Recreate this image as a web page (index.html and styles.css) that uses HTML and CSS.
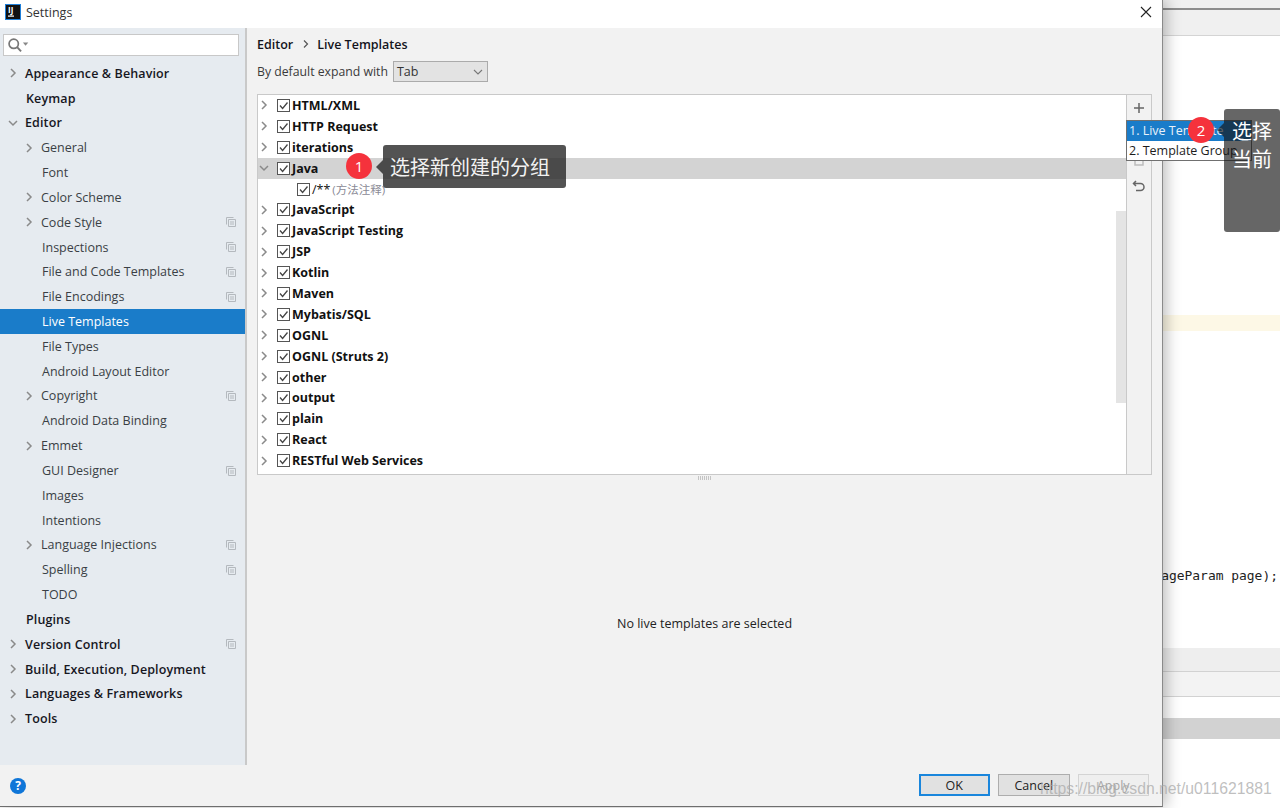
FILE: index.html
```html
<!DOCTYPE html>
<html lang="en">
<head>
<meta charset="utf-8">
<title>Settings</title>
<link rel="stylesheet" href="styles.css">
</head>
<body>
<div class="dialog">
  <header class="titlebar">
    <svg class="app-logo" width="16" height="16" viewBox="0 0 16 16"><rect x="0.5" y="0.5" width="15" height="15" fill="#111" stroke="#1f7fd8"/><rect x="3" y="11.5" width="6" height="1.2" fill="#fff"/></svg>
    <span class="app-mark">IJ</span>
    <span class="title">Settings</span>
    <svg class="close" width="12" height="12" viewBox="0 0 12 12"><path d="M1 1l10 10M11 1L1 11" stroke="#222" stroke-width="1.1" fill="none"/></svg>
  </header>
  <div class="main">
    <aside class="sidebar">
      <div class="search">
        <svg width="22" height="16" viewBox="0 0 18 13"><circle cx="5.5" cy="5.5" r="3.8" fill="none" stroke="#777" stroke-width="1.4"/><path d="M8.3 8.3l3.2 3.4" stroke="#777" stroke-width="1.6"/><path d="M13 4.5h4.4l-2.2 2.6z" fill="#888"/></svg>
      </div>
      <nav class="nav">
        <div class="nav-row top"><svg class="chev" viewBox="0 0 10 10"><path d="M3 1l4 4-4 4"/></svg><span>Appearance &amp; Behavior</span></div>
        <div class="nav-row top plain"><span>Keymap</span></div>
        <div class="nav-row top"><svg class="chev" viewBox="0 0 10 10"><path d="M1 3l4 4 4-4"/></svg><span>Editor</span></div>
        <div class="nav-row sub"><svg class="chev" viewBox="0 0 10 10"><path d="M3 1l4 4-4 4"/></svg><span>General</span></div>
        <div class="nav-row sub plain"><span>Font</span></div>
        <div class="nav-row sub"><svg class="chev" viewBox="0 0 10 10"><path d="M3 1l4 4-4 4"/></svg><span>Color Scheme</span></div>
        <div class="nav-row sub"><svg class="chev" viewBox="0 0 10 10"><path d="M3 1l4 4-4 4"/></svg><span>Code Style</span><svg class="copy" viewBox="0 0 10 10"><path d="M0.5 7.5v-7h7M2.5 2.5h7v7h-7zM4 5h4M4 7h4"/></svg></div>
        <div class="nav-row sub plain"><span>Inspections</span><svg class="copy" viewBox="0 0 10 10"><path d="M0.5 7.5v-7h7M2.5 2.5h7v7h-7zM4 5h4M4 7h4"/></svg></div>
        <div class="nav-row sub plain"><span>File and Code Templates</span><svg class="copy" viewBox="0 0 10 10"><path d="M0.5 7.5v-7h7M2.5 2.5h7v7h-7zM4 5h4M4 7h4"/></svg></div>
        <div class="nav-row sub plain"><span>File Encodings</span><svg class="copy" viewBox="0 0 10 10"><path d="M0.5 7.5v-7h7M2.5 2.5h7v7h-7zM4 5h4M4 7h4"/></svg></div>
        <div class="nav-row sub plain selected"><span>Live Templates</span></div>
        <div class="nav-row sub plain"><span>File Types</span></div>
        <div class="nav-row sub plain"><span>Android Layout Editor</span></div>
        <div class="nav-row sub"><svg class="chev" viewBox="0 0 10 10"><path d="M3 1l4 4-4 4"/></svg><span>Copyright</span><svg class="copy" viewBox="0 0 10 10"><path d="M0.5 7.5v-7h7M2.5 2.5h7v7h-7zM4 5h4M4 7h4"/></svg></div>
        <div class="nav-row sub plain"><span>Android Data Binding</span></div>
        <div class="nav-row sub"><svg class="chev" viewBox="0 0 10 10"><path d="M3 1l4 4-4 4"/></svg><span>Emmet</span></div>
        <div class="nav-row sub plain"><span>GUI Designer</span><svg class="copy" viewBox="0 0 10 10"><path d="M0.5 7.5v-7h7M2.5 2.5h7v7h-7zM4 5h4M4 7h4"/></svg></div>
        <div class="nav-row sub plain"><span>Images</span></div>
        <div class="nav-row sub plain"><span>Intentions</span></div>
        <div class="nav-row sub"><svg class="chev" viewBox="0 0 10 10"><path d="M3 1l4 4-4 4"/></svg><span>Language Injections</span><svg class="copy" viewBox="0 0 10 10"><path d="M0.5 7.5v-7h7M2.5 2.5h7v7h-7zM4 5h4M4 7h4"/></svg></div>
        <div class="nav-row sub plain"><span>Spelling</span><svg class="copy" viewBox="0 0 10 10"><path d="M0.5 7.5v-7h7M2.5 2.5h7v7h-7zM4 5h4M4 7h4"/></svg></div>
        <div class="nav-row sub plain"><span>TODO</span></div>
        <div class="nav-row top plain"><span>Plugins</span></div>
        <div class="nav-row top"><svg class="chev" viewBox="0 0 10 10"><path d="M3 1l4 4-4 4"/></svg><span>Version Control</span><svg class="copy" viewBox="0 0 10 10"><path d="M0.5 7.5v-7h7M2.5 2.5h7v7h-7zM4 5h4M4 7h4"/></svg></div>
        <div class="nav-row top"><svg class="chev" viewBox="0 0 10 10"><path d="M3 1l4 4-4 4"/></svg><span>Build, Execution, Deployment</span></div>
        <div class="nav-row top"><svg class="chev" viewBox="0 0 10 10"><path d="M3 1l4 4-4 4"/></svg><span>Languages &amp; Frameworks</span></div>
        <div class="nav-row top"><svg class="chev" viewBox="0 0 10 10"><path d="M3 1l4 4-4 4"/></svg><span>Tools</span></div>
      </nav>
    </aside>
    <section class="content">
      <div class="crumbs"><span>Editor</span><svg class="crumb-sep" viewBox="0 0 10 10"><path d="M3 1.5l3.5 3.5L3 8.5"/></svg><span>Live Templates</span></div>
      <div class="expand"><span>By default expand with</span>
        <div class="combo"><span>Tab</span><svg class="combo-arrow" viewBox="0 0 10 10"><path d="M1 3l4 4 4-4"/></svg></div>
      </div>
      <div class="tree-panel">
        <div class="tree">
          <div class="tree-row"><svg class="chev" viewBox="0 0 10 10"><path d="M3 1l4 4-4 4"/></svg><svg class="check" viewBox="0 0 13 13"><rect x="0.5" y="0.5" width="12" height="12"/><path d="M3 6.5l2.6 3L10.5 3.5"/></svg><span class="name">HTML/XML</span></div>
          <div class="tree-row"><svg class="chev" viewBox="0 0 10 10"><path d="M3 1l4 4-4 4"/></svg><svg class="check" viewBox="0 0 13 13"><rect x="0.5" y="0.5" width="12" height="12"/><path d="M3 6.5l2.6 3L10.5 3.5"/></svg><span class="name">HTTP Request</span></div>
          <div class="tree-row"><svg class="chev" viewBox="0 0 10 10"><path d="M3 1l4 4-4 4"/></svg><svg class="check" viewBox="0 0 13 13"><rect x="0.5" y="0.5" width="12" height="12"/><path d="M3 6.5l2.6 3L10.5 3.5"/></svg><span class="name">iterations</span></div>
          <div class="tree-row active"><svg class="chev" viewBox="0 0 10 10"><path d="M1 3l4 4 4-4"/></svg><svg class="check" viewBox="0 0 13 13"><rect x="0.5" y="0.5" width="12" height="12"/><path d="M3 6.5l2.6 3L10.5 3.5"/></svg><span class="name">Java</span></div>
          <div class="tree-row child"><svg class="check" viewBox="0 0 13 13"><rect x="0.5" y="0.5" width="12" height="12"/><path d="M3 6.5l2.6 3L10.5 3.5"/></svg><span class="leaf">/**</span><span class="hint">(方法注释)</span></div>
          <div class="tree-row"><svg class="chev" viewBox="0 0 10 10"><path d="M3 1l4 4-4 4"/></svg><svg class="check" viewBox="0 0 13 13"><rect x="0.5" y="0.5" width="12" height="12"/><path d="M3 6.5l2.6 3L10.5 3.5"/></svg><span class="name">JavaScript</span></div>
          <div class="tree-row"><svg class="chev" viewBox="0 0 10 10"><path d="M3 1l4 4-4 4"/></svg><svg class="check" viewBox="0 0 13 13"><rect x="0.5" y="0.5" width="12" height="12"/><path d="M3 6.5l2.6 3L10.5 3.5"/></svg><span class="name">JavaScript Testing</span></div>
          <div class="tree-row"><svg class="chev" viewBox="0 0 10 10"><path d="M3 1l4 4-4 4"/></svg><svg class="check" viewBox="0 0 13 13"><rect x="0.5" y="0.5" width="12" height="12"/><path d="M3 6.5l2.6 3L10.5 3.5"/></svg><span class="name">JSP</span></div>
          <div class="tree-row"><svg class="chev" viewBox="0 0 10 10"><path d="M3 1l4 4-4 4"/></svg><svg class="check" viewBox="0 0 13 13"><rect x="0.5" y="0.5" width="12" height="12"/><path d="M3 6.5l2.6 3L10.5 3.5"/></svg><span class="name">Kotlin</span></div>
          <div class="tree-row"><svg class="chev" viewBox="0 0 10 10"><path d="M3 1l4 4-4 4"/></svg><svg class="check" viewBox="0 0 13 13"><rect x="0.5" y="0.5" width="12" height="12"/><path d="M3 6.5l2.6 3L10.5 3.5"/></svg><span class="name">Maven</span></div>
          <div class="tree-row"><svg class="chev" viewBox="0 0 10 10"><path d="M3 1l4 4-4 4"/></svg><svg class="check" viewBox="0 0 13 13"><rect x="0.5" y="0.5" width="12" height="12"/><path d="M3 6.5l2.6 3L10.5 3.5"/></svg><span class="name">Mybatis/SQL</span></div>
          <div class="tree-row"><svg class="chev" viewBox="0 0 10 10"><path d="M3 1l4 4-4 4"/></svg><svg class="check" viewBox="0 0 13 13"><rect x="0.5" y="0.5" width="12" height="12"/><path d="M3 6.5l2.6 3L10.5 3.5"/></svg><span class="name">OGNL</span></div>
          <div class="tree-row"><svg class="chev" viewBox="0 0 10 10"><path d="M3 1l4 4-4 4"/></svg><svg class="check" viewBox="0 0 13 13"><rect x="0.5" y="0.5" width="12" height="12"/><path d="M3 6.5l2.6 3L10.5 3.5"/></svg><span class="name">OGNL (Struts 2)</span></div>
          <div class="tree-row"><svg class="chev" viewBox="0 0 10 10"><path d="M3 1l4 4-4 4"/></svg><svg class="check" viewBox="0 0 13 13"><rect x="0.5" y="0.5" width="12" height="12"/><path d="M3 6.5l2.6 3L10.5 3.5"/></svg><span class="name">other</span></div>
          <div class="tree-row"><svg class="chev" viewBox="0 0 10 10"><path d="M3 1l4 4-4 4"/></svg><svg class="check" viewBox="0 0 13 13"><rect x="0.5" y="0.5" width="12" height="12"/><path d="M3 6.5l2.6 3L10.5 3.5"/></svg><span class="name">output</span></div>
          <div class="tree-row"><svg class="chev" viewBox="0 0 10 10"><path d="M3 1l4 4-4 4"/></svg><svg class="check" viewBox="0 0 13 13"><rect x="0.5" y="0.5" width="12" height="12"/><path d="M3 6.5l2.6 3L10.5 3.5"/></svg><span class="name">plain</span></div>
          <div class="tree-row"><svg class="chev" viewBox="0 0 10 10"><path d="M3 1l4 4-4 4"/></svg><svg class="check" viewBox="0 0 13 13"><rect x="0.5" y="0.5" width="12" height="12"/><path d="M3 6.5l2.6 3L10.5 3.5"/></svg><span class="name">React</span></div>
          <div class="tree-row"><svg class="chev" viewBox="0 0 10 10"><path d="M3 1l4 4-4 4"/></svg><svg class="check" viewBox="0 0 13 13"><rect x="0.5" y="0.5" width="12" height="12"/><path d="M3 6.5l2.6 3L10.5 3.5"/></svg><span class="name">RESTful Web Services</span></div>
          <div class="scrollbar"></div>
        </div>
        <div class="tools">
          <svg class="tool" viewBox="0 0 14 14"><path d="M7 2v10M2 7h10"/></svg>
          <svg class="tool" viewBox="0 0 14 14"><path d="M2 7h10"/></svg>
          <svg class="tool muted" viewBox="0 0 14 14"><path d="M3 2h8v10H3z"/></svg>
          <svg class="tool" viewBox="0 0 14 14"><path d="M4 2L1.5 4.5 4 7M2 4.5h6.5a3.5 3.5 0 0 1 0 7H4"/></svg>
        </div>
      </div>
      <div class="splitter"></div>
      <div class="empty"><span>No live templates are selected</span></div>
    </section>
  </div>
  <footer class="footer">
    <span class="help">?</span>
    <div class="buttons">
      <div class="btn default">OK</div>
      <div class="btn">Cancel</div>
      <div class="btn disabled">Apply</div>
    </div>
  </footer>
</div>
<div class="backdrop">
  <div class="bd-tabs"></div>
  <div class="bd-code">
    <div class="bd-caret"></div>
    <div class="bd-text">ageParam page);</div>
  </div>
  <div class="bd-bar one"></div>
  <div class="bd-bar two"></div>
  <div class="bd-blank"></div>
  <div class="bd-bar three"></div>
  <div class="bd-rest"></div>
</div>

<div class="tip tip-one"><span>选择新创建的分组</span></div>
<div class="badge badge-one">1</div>
<div class="popup">
  <div class="popup-item on">1. Live Template</div>
  <div class="popup-item">2. Template Group</div>
</div>
<div class="tip tip-two"><span>选择<br>当前</span></div>
<div class="badge badge-two">2</div>
<div class="watermark">https://blog.csdn.net/u011621881</div>
</body>
</html>
```
FILE: styles.css
```css
* { box-sizing: border-box; }
html, body { margin: 0; padding: 0; }
body {
  width: 1280px; height: 808px; overflow: hidden; position: relative;
  display: flex; background: #fff;
  font-family: "Open Sans", "Noto Sans", sans-serif; font-size: 12.5px; color: #1c1c1c;
}
.dialog {
  width: 1163px; height: 807px; flex: none; display: flex; flex-direction: column;
  background: #f2f2f2; border-right: 1px solid #8a8a8a; border-bottom: 1px solid #6e6e6e;
  box-shadow: 3px 0 14px rgba(0,0,0,.28); position: relative; z-index: 1;
}
.titlebar { height: 28px; flex: none; background: #fff; display: flex; align-items: center; padding: 0 0 0 5px; position: relative; }
.app-logo { flex: none; margin-top: -4px; }
.app-mark { position: absolute; left: 8px; top: 5px; color: #fff; font-size: 8px; font-weight: 700; line-height: 10px; }
.title { margin-left: 5px; margin-top: -3px; font-size: 12.5px; color: #333; }
.close { margin-left: auto; margin-right: 10px; margin-top: -5px; }
.main { flex: 1; display: flex; min-height: 0; }
.sidebar { width: 247px; flex: none; background: #e6ebf0; border-right: 2px solid #c9c9c9; padding: 6px 0 0; }
.search {
  margin-left: 3px; width: 236px; height: 22px; background: #fff; border: 1px solid #c8c8c8;
  display: flex; align-items: center; padding-left: 3px;
}
.nav { margin-top: 4.8px; }
.nav-row { height: 24.83px; display: flex; align-items: center; position: relative; }
.nav-row .chev { width: 10px; height: 10px; flex: none; }
.chev { fill: none; stroke: #8a8a8a; stroke-width: 1.5; }
.nav-row.top { padding-left: 8px; font-weight: 600; color: #17171f; letter-spacing: .12px; }
.nav-row.top span { margin-left: 7px; }
.nav-row.top.plain { padding-left: 26px; }
.nav-row.top.plain span { margin-left: 0; }
.nav-row.sub { padding-left: 24px; color: #3a3f45; }
.nav-row.sub span { margin-left: 7px; }
.nav-row.sub.plain { padding-left: 42px; }
.nav-row.sub.plain span { margin-left: 0; }
.nav-row.selected { background: #1a7cc9; color: #fff; }
.copy { position: absolute; left: 226px; top: 7.5px; width: 10px; height: 10px; fill: none; stroke: #b4b9be; stroke-width: 1; }
.content { flex: 1; min-width: 0; padding: 0 10px 0 10px; display: flex; flex-direction: column; }
.crumbs { height: 32px; display: flex; align-items: center; font-weight: 600; color: #14141c; flex: none; }
.crumb-sep { width: 10px; height: 10px; margin: 0 6px 0 8px; fill: none; stroke: #555; stroke-width: 1.2; }
.expand { height: 23px; display: flex; align-items: center; gap: 5px; color: #3a3a3a; flex: none; font-size: 12.25px; }
.combo {
  width: 95px; height: 21px; background: #e3e3e3; border: 1px solid #ababab;
  display: flex; align-items: center; padding: 0 0 0 3px; color: #333; font-size: 12.5px;
}
.combo-arrow { width: 10px; height: 10px; margin-left: auto; margin-right: 4px; fill: none; stroke: #777; stroke-width: 1.1; }
.tree-panel { margin-top: 11px; height: 381px; flex: none; background: #fff; border: 1px solid #c9c9c9; display: flex; }
.tree { flex: 1; min-width: 0; position: relative; padding-top: 0; }
.tree-row { height: 20.9px; display: flex; align-items: center; padding-left: 1px; font-weight: 700; color: #111; }
.tree-row .chev { width: 10px; height: 10px; flex: none; }
.tree-row.active { background: #d3d3d3; }
.check { width: 13px; height: 13px; flex: none; margin-left: 8px; fill: #fff; }
.check rect { stroke: #555; stroke-width: 1; }
.check path { stroke: #444; stroke-width: 1.3; fill: none; }
.tree-row .name { margin-left: 2px; }
.tree-row.child { padding-left: 31px; font-weight: 400; }
.tree-row.child .check { margin-left: 8px; }
.leaf { margin-left: 2px; }
.hint { margin-left: 2px; color: #8a8a96; font-family: "Open Sans", "Noto Sans CJK SC", sans-serif; font-size: 11.5px; }
.scrollbar { position: absolute; right: 0; top: 116px; width: 10px; height: 192px; background: #e4e4e4; }
.tools { width: 25px; flex: none; border-left: 1px solid #c9c9c9; background: #f2f2f2; display: flex; flex-direction: column; align-items: center; padding-top: 6px; gap: 12px; }
.tool { width: 14px; height: 14px; flex: none; fill: none; stroke: #666; stroke-width: 1.5; }
.tool.muted { stroke: #bdbdbd; }
.splitter { height: 8px; flex: none; position: relative; }
.splitter::after { content: ""; position: absolute; left: 441px; top: 1px; width: 14px; height: 4px; background: repeating-linear-gradient(90deg, #c4c4c4 0 1px, transparent 1px 2px); }
.empty { flex: 1; display: flex; align-items: center; justify-content: center; color: #222; padding-bottom: 1px; }
.footer { height: 41px; flex: none; display: flex; align-items: center; padding: 0 13px 0 10px; position: relative; }
.help {
  width: 16px; height: 16px; border-radius: 50%; background: #0f76d8; color: #fff;
  display: flex; align-items: center; justify-content: center; font-weight: 700; font-size: 12px;
}
.buttons { margin-left: auto; display: flex; gap: 8px; margin-top: -1px; }
.btn { width: 71.5px; height: 22px; background: #e1e1e1; border: 1px solid #adadad; display: flex; align-items: center; justify-content: center; color: #222; font-size: 12.5px; }
.btn.default { border: 2px solid #1a86dc; }
.btn.disabled { background: #efefef; border-color: #d4d4d4; color: #a5a5a5; }
.backdrop { flex: 1; min-width: 0; height: 808px; display: flex; flex-direction: column; background: #fff; }
.bd-tabs { height: 36px; flex: none; background: #f0f0f0; border-top: 1px solid #f0f0f0; position: relative; border-bottom: 1px solid #d4d4d4; }
.bd-tabs::before { content: ""; position: absolute; left: 0; right: 0; top: 7px; height: 2px; background: #8d8d8d; }
.bd-code { height: 612px; flex: none; position: relative; background: #fff; }
.bd-caret { position: absolute; left: 0; right: 0; top: 279px; height: 16px; background: #fdf8e6; }
.bd-text { position: absolute; right: 2px; top: 531px; font-family: "DejaVu Sans Mono", "Liberation Mono", monospace; font-size: 12.95px; line-height: 18px; color: #222; white-space: nowrap; }
.bd-bar { flex: none; border-bottom: 1px solid #d2d2d2; }
.bd-bar.one { height: 24px; background: #eee; }
.bd-bar.two { height: 25px; background: #f3f3f3; }
.bd-blank { height: 21px; flex: none; }
.bd-bar.three { height: 21px; background: #d2d2d2; border: 0; }
.bd-rest { flex: 1; }
.tip {
  position: absolute; z-index: 3; background: rgba(40,40,40,.8); color: #fff; border-radius: 3px;
  font-family: "Noto Sans CJK SC", sans-serif; font-size: 20px;
}
.tip-one { left: 383px; top: 145px; width: 183px; height: 43px; display: flex; align-items: center; padding-left: 7px; color: #f2f2f2; }
.tip-one::before { content: ""; position: absolute; left: -7px; top: 15px; border: 7px solid transparent; border-left: 0; border-right-color: rgba(40,40,40,.8); }
.tip-two { left: 1224px; top: 109px; width: 56px; height: 123px; padding: 8px 0 0 8px; line-height: 27.5px; background: rgba(20,20,20,.65); }
.tip-two::before { content: ""; position: absolute; left: -7px; top: 14px; border: 7px solid transparent; border-left: 0; border-right-color: rgba(20,20,20,.65); }
.badge {
  position: absolute; z-index: 4; width: 26px; height: 26px; border-radius: 50%; background: #f5323c; color: #fff;
  display: flex; align-items: center; justify-content: center; font-family: "Open Sans", sans-serif; font-size: 15px;
}
.badge-one { left: 346px; top: 153px; }
.badge-two { left: 1188px; top: 117px; }
.popup { position: absolute; z-index: 2; left: 1126px; top: 120px; width: 126px; height: 41px; background: #fff; border: 1px solid #707070; font-size: 12.5px; }
.popup-item { height: 20px; padding: 0 0 1px 2px; display: flex; align-items: center; white-space: nowrap; overflow: hidden; color: #1c1c1c; }
.popup-item.on { background: #1a7cc9; color: #e8f2fa; }
.watermark { position: absolute; z-index: 5; left: 1040px; top: 780px; font-family: "Liberation Sans", sans-serif; font-size: 15.75px; color: rgba(170,170,170,.75); white-space: nowrap; }
```
